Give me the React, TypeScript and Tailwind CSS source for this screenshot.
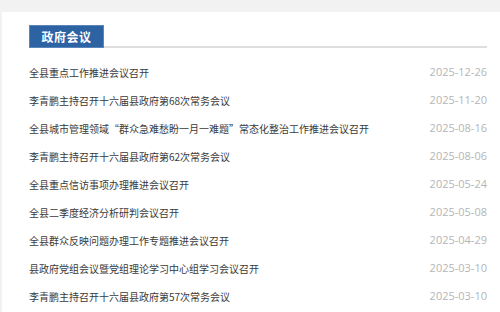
const NEWS = [
  { title: '全县重点工作推进会议召开', date: '2025-12-26' },
  { title: '李青鹏主持召开十六届县政府第68次常务会议', date: '2025-11-20' },
  { title: '全县城市管理领域“群众急难愁盼一月一难题”常态化整治工作推进会议召开', date: '2025-08-16' },
  { title: '李青鹏主持召开十六届县政府第62次常务会议', date: '2025-08-06' },
  { title: '全县重点信访事项办理推进会议召开', date: '2025-05-24' },
  { title: '全县二季度经济分析研判会议召开', date: '2025-05-08' },
  { title: '全县群众反映问题办理工作专题推进会议召开', date: '2025-04-29' },
  { title: '县政府党组会议暨党组理论学习中心组学习会议召开', date: '2025-03-10' },
  { title: '李青鹏主持召开十六届县政府第57次常务会议', date: '2025-03-10' },
]

export default function App() {
  return (
    <div className="w-[500px] h-[312px] overflow-hidden bg-[#f2f2f2] pt-[12px] pl-[2px] font-['Noto_Sans_CJK_SC',sans-serif]">
      <div className="bg-white h-full pl-[27px] pr-[13px] pt-[13px]">
        {/* header tab */}
        <div className="flex items-end border-b-2 border-[#dedede] h-[23px]">
          <div className="h-[23px] w-[75px] mb-[-2px] bg-[#2d62a3] border border-[#5a86bd] flex items-center justify-center">
            <span className="text-white text-[12px] font-bold tracking-[0.5px]">政府会议</span>
          </div>
        </div>

        <ul className="mt-[10px]">
          {NEWS.map((n, i) => (
            <li key={i} className="h-[28px] flex items-center justify-between">
              <span className="text-[10px] text-[#3a3a3a] truncate">{n.title}</span>
              <span className="text-[11px] text-[#b5b5b5] font-['Open_Sans',sans-serif] shrink-0 ml-4">{n.date}</span>
            </li>
          ))}
        </ul>
      </div>
    </div>
  )
}
